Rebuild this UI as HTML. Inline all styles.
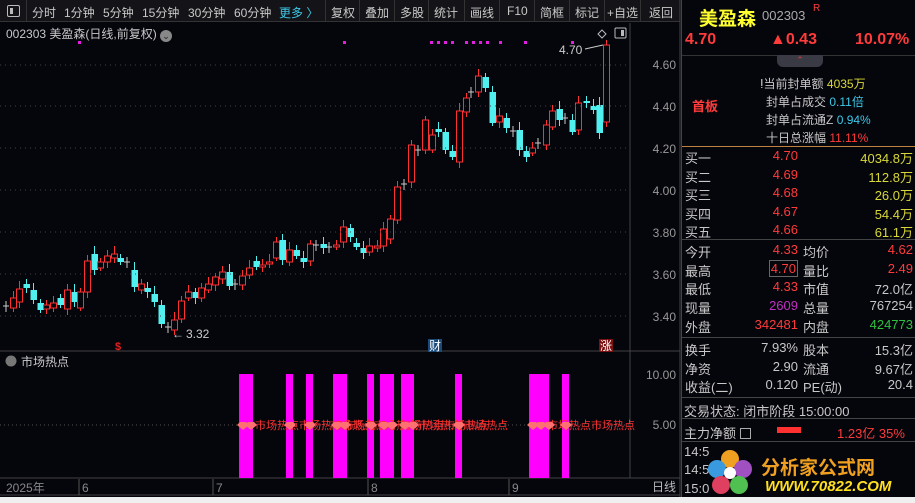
<!DOCTYPE html><html><head><meta charset="utf-8"><style>
*{margin:0;padding:0;box-sizing:border-box}
body{width:915px;height:503px;overflow:hidden;background:#05050c;font-family:"Liberation Sans","Noto Sans CJK SC",sans-serif;position:relative;color:#c8c8c8}
.a{position:absolute;white-space:nowrap}
#tb{position:absolute;left:0;top:0;width:680px;height:22px;background:#141418;border-bottom:1px solid #333;font-size:12px;color:#c8c8c8}
#tb span{position:absolute;top:4px}
.sep{position:absolute;top:0;width:1px;height:22px;background:#333}
#rp{position:absolute;left:681px;top:0;width:234px;height:503px;background:#05050c;border-left:1px solid #444;font-size:13px}
.hl{position:absolute;left:0;width:234px;height:1px;background:#444}
.r{color:#ff3b3b}.y{color:#d8d838}.c{color:#3cc8e8}.w{color:#c8c8c8}
</style></head><body>
<div id="tb">
<div style="position:absolute;left:7px;top:5px;width:13px;height:12px;border:1px solid #bbb;border-radius:2px"><div style="position:absolute;left:2px;top:2px;width:3px;height:6px;background:#bbb"></div></div>
<div class="sep" style="left:26px"></div>
<span style="left:32px">分时</span><span style="left:64px">1分钟</span><span style="left:103px">5分钟</span><span style="left:142px">15分钟</span><span style="left:188px">30分钟</span><span style="left:234px">60分钟</span><span style="left:279px;color:#3cc8e8">更多 〉</span>
<div class="sep" style="left:325px"></div><span style="left:331px">复权</span>
<div class="sep" style="left:359px"></div><span style="left:365px">叠加</span>
<div class="sep" style="left:394px"></div><span style="left:400px">多股</span>
<div class="sep" style="left:428px"></div><span style="left:434px">统计</span>
<div class="sep" style="left:464px"></div><span style="left:470px">画线</span>
<div class="sep" style="left:499px"></div><span style="left:507px">F10</span>
<div class="sep" style="left:534px"></div><span style="left:540px">简框</span>
<div class="sep" style="left:569px"></div><span style="left:575px">标记</span>
<div class="sep" style="left:604px"></div><span style="left:607px">+自选</span>
<div class="sep" style="left:640px"></div><span style="left:649px">返回</span>
</div>
<div class="a" style="left:6px;top:25px;font-size:12px;color:#c8c8c8">002303 美盈森(日线,前复权) <span style="display:inline-block;width:12px;height:12px;border-radius:6px;background:#888;color:#222;font-size:9px;text-align:center;line-height:12px;vertical-align:-1px">⌄</span></div>
<svg class="a" style="left:0;top:0" width="681" height="503" id="sv">
<line x1="630" y1="23" x2="630" y2="478" stroke="#444"/>
<line x1="0" y1="351" x2="680" y2="351" stroke="#444"/>
<line x1="0" y1="478" x2="680" y2="478" stroke="#444"/>
<line x1="0" y1="495" x2="680" y2="495" stroke="#444"/>
<line x1="680" y1="0" x2="680" y2="503" stroke="#444"/>
<g id="cd"></g>
<g font-size="12" fill="#999" text-anchor="end">
<text x="676" y="69">4.60</text><text x="676" y="111">4.40</text><text x="676" y="153">4.20</text><text x="676" y="195">4.00</text><text x="676" y="237">3.80</text><text x="676" y="279">3.60</text><text x="676" y="321">3.40</text>
<text x="676" y="379">10.00</text><text x="676" y="429">5.00</text>
</g>
<text x="676" y="491" font-size="12" fill="#bbb" text-anchor="end">日线</text>
<g font-size="12" fill="#888"><text x="6" y="492">2025年</text><text x="82" y="492">6</text><text x="216" y="492">7</text><text x="371" y="492">8</text><text x="512" y="492">9</text></g>
<g stroke="#555"><line x1="79" y1="479" x2="79" y2="495"/><line x1="213" y1="479" x2="213" y2="495"/><line x1="368" y1="479" x2="368" y2="495"/><line x1="509" y1="479" x2="509" y2="495"/></g>
<text x="186" y="338" font-size="12" fill="#ccc">3.32</text><text x="172" y="338" font-size="12" fill="#ccc">←</text>
<text x="559" y="54" font-size="12" fill="#ccc">4.70</text><path d="M585 49 L603 45" stroke="#ccc"/>
<path d="M602 30 l4 4 l-4 4 l-4 -4z" fill="none" stroke="#bbb"/>
<rect x="615" y="28" width="11" height="10" rx="1" fill="none" stroke="#bbb"/><rect x="621" y="30" width="3" height="6" fill="#bbb"/>
<text x="115" y="350" font-size="11" fill="#e02020" font-weight="bold">$</text>
<rect x="428" y="339" width="14" height="13" fill="#1a4a7a"/><text x="429" y="350" font-size="12" fill="#fff">财</text>
<rect x="599" y="339" width="14" height="13" fill="#7a1010"/><text x="600" y="350" font-size="12" fill="#fff">涨</text>
<circle cx="11" cy="361" r="5.5" fill="#777"/><text x="21" y="366" font-size="12" fill="#ccc">市场热点</text>
<line x1="0" y1="425" x2="630" y2="425" stroke="#555" stroke-dasharray="1,3"/>
<g fill="#ff00ff" id="mb"></g>
<g fill="#ff3030" font-size="11">
<text x="255" y="429">市场热点市场热点市场热点</text><text x="330" y="429">市场热点市场热点市场热点</text><text x="400" y="429">市场热点市场热点</text><text x="464" y="429">市场热点</text><text x="547" y="429">市场热点市场热点</text>
</g>
<g fill="#ff7070" id="dm"></g>
</svg>
<div id="rp">
<div class="a" style="left:17px;top:4px;font-size:19px;color:#ffff30;font-weight:bold">美盈森</div>
<div class="a" style="left:80px;top:8px;font-size:13px;color:#aaa">002303</div>
<div class="a" style="left:131px;top:3px;font-size:10px"><span class="r">R</span></div>
<div class="a r" style="left:3px;top:31px;font-size:16px;font-weight:bold">4.70</div>
<div class="a r" style="left:88px;top:31px;font-size:16px;font-weight:bold">▲0.43</div>
<div class="a r" style="left:173px;top:31px;font-size:16px;font-weight:bold">10.07%</div>
<div class="hl" style="top:55px;background:#333"></div>
<div class="a" style="left:95px;top:55px;width:46px;height:12px;background:#3a3a44;border-radius:0 0 6px 6px;color:#e04040;font-size:9px;text-align:center">⌃</div>
<div class="a r" style="left:10px;top:96px;font-size:13px;font-weight:bold">首板</div>
<div class="a" style="left:78px;top:75px;font-size:12px"><span class="w">ⵑ当前封单额</span> <span class="y">4035万</span></div>
<div class="a" style="left:84px;top:93px;font-size:12px"><span class="w">封单占成交</span> <span class="c">0.11倍</span></div>
<div class="a" style="left:84px;top:111px;font-size:12px"><span class="w">封单占流通Z</span> <span class="c">0.94%</span></div>
<div class="a" style="left:84px;top:129px;font-size:12px"><span class="w">十日总涨幅</span> <span class="r">11.11%</span></div>
<div class="hl" style="top:146px;background:#c08040"></div>
<div id="tbl"></div>
<div class="hl" style="top:239px"></div>
<div class="hl" style="top:337px"></div>
<div class="hl" style="top:397px"></div>
<div class="hl" style="top:418px"></div>
<div class="hl" style="top:441px"></div>
<div class="a w" style="left:2px;top:401px;font-size:13px">交易状态: 闭市阶段 15:00:00</div>
<div class="a w" style="left:2px;top:423px;font-size:13px">主力净额 <span style="display:inline-block;width:11px;height:11px;border:1px solid #aaa;vertical-align:-1px"></span></div>
<div class="a" style="left:95px;top:427px;width:24px;height:6px;background:#ff3030"></div>
<div class="a r" style="left:155px;top:423px;font-size:13px">1.23亿 35%</div>
<div class="a w" style="left:2px;top:444px;font-size:13px">14:5</div>
<div class="a w" style="left:2px;top:462px;font-size:13px">14:5</div>
<div class="a w" style="left:2px;top:481px;font-size:13px">15:0</div>
</div>
<div class="a" style="left:705px;top:447px;width:210px;height:50px">
<svg width="50" height="50" style="position:absolute;left:0;top:0"><circle cx="25" cy="12" r="9" fill="#f0a020"/><circle cx="12" cy="22" r="9" fill="#3a9ae0"/><circle cx="38" cy="22" r="9" fill="#a050c0"/><circle cx="16" cy="38" r="9" fill="#e04060"/><circle cx="34" cy="38" r="9" fill="#50c050"/><circle cx="25" cy="26" r="6" fill="#fff"/></svg>
<div class="a" style="left:56px;top:6px;font-size:19px;font-weight:bold;color:#f0a020">分析家公式网</div>
<div class="a" style="left:60px;top:31px;font-size:15px;font-weight:bold;font-style:italic;color:#ffe020">WWW.70822.COM</div>
</div>
<div class="a" style="left:0;top:497px;width:915px;height:6px;background:#f0f0f0"></div>
<script>
var d=[[6,306,306],[13,298,308,1],[19,289,302,1],[26,284,288],[33,290,300],[40,303,310],[46,305,309,1],[53,303,308,1],[60,298,305],[67,290,309,1],[74,292,302],[80,292,308,1],[87,261,292,1],[94,254,270],[100,262,268,1],[107,256,262,1],[114,254,258,1],[120,258,262],[127,262,263],[134,270,287],[141,284,290,1],[147,288,292],[154,294,302],[161,305,324],[168,327,327],[174,320,330,1],[181,301,319,1],[188,292,298,1],[195,292,298],[201,288,298,1],[208,284,290,1],[215,277,285,1],[222,272,279,1],[229,272,286],[235,284,284],[242,276,285,1],[249,268,275,1],[256,261,267],[262,265,267,1],[269,262,264,1],[276,242,258,1],[282,240,260],[289,250,262,1],[296,250,256],[303,258,262],[310,244,261,1],[316,245,245],[323,244,248],[329,247,247],[336,245,247,1],[343,227,242,1],[350,228,237],[356,243,247],[363,248,253],[369,246,252,1],[377,246,248,1],[383,229,246,1],[390,219,239,1],[397,187,220,1],[404,184,185],[411,145,182,1],[418,150,151],[425,120,150,1],[432,135,150,1],[438,129,132],[445,132,150],[452,151,157],[459,111,162,1],[466,98,112,1],[471,92,92],[478,76,92,1],[485,77,88],[492,92,123],[499,116,122,1],[506,118,128],[513,131,132],[519,130,150],[526,151,157],[532,148,153,1],[538,143,143],[546,125,145,1],[552,111,127,1],[559,109,120],[565,118,118],[572,120,132],[578,103,130,1],[586,101,103],[593,106,110],[599,105,133],[606,45,122,1]];
var s='';
d.forEach(function(c){var x=c[0],t=c[1],b=c[2],up=c[3];var hi=t-4-(x%5),lo=b+3+(x%4);
if(b-t<2){s+='<line x1="'+x+'" y1="'+(t-5)+'" x2="'+x+'" y2="'+(t+6)+'" stroke="#ccc"/><line x1="'+(x-3)+'" y1="'+t+'" x2="'+(x+3)+'" y2="'+t+'" stroke="#ccc"/>';return;}
var col=up?'#ff3030':'#50f0f0';
s+='<line x1="'+(x+.5)+'" y1="'+hi+'" x2="'+(x+.5)+'" y2="'+lo+'" stroke="'+col+'"/>';
s+=up?'<rect x="'+(x-2.5)+'" y="'+t+'" width="6" height="'+(b-t)+'" fill="#05050c" stroke="'+col+'"/>':'<rect x="'+(x-2.5)+'" y="'+t+'" width="6.5" height="'+(b-t)+'" fill="'+col+'"/>';});
s+='<g stroke="#444" stroke-dasharray="1,4">';[65,106,148,190,232,274,316].forEach(function(y){s+='<line x1="0" y1="'+y+'" x2="630" y2="'+y+'"/>'});s+='</g>';
[78,343,430,437,444,451,465,472,479,486,499,524,571].forEach(function(x){s+='<rect x="'+x+'" y="41" width="3" height="3" fill="#e020e0"/>'});
document.getElementById('cd').innerHTML=s;
var m='',dm='';[[239,253],[286,293],[306,313],[333,347],[367,374],[380,394],[401,414],[455,462],[529,549],[562,569]].forEach(function(b){m+='<rect x="'+b[0]+'" y="374" width="'+(b[1]-b[0])+'" height="104"/>';for(var x=b[0];x<b[1];x+=8)dm+='<path d="M'+(x-2)+' 425 l3 -3 h6 l3 3 l-6 5z"/>'});
document.getElementById('mb').innerHTML=m;document.getElementById('dm').innerHTML=dm;
var rows=[['买一','4.70','4034.8万','y'],['买二','4.69','112.8万','y'],['买三','4.68','26.0万','y'],['买四','4.67','54.4万','y'],['买五','4.66','61.1万','y']];
var h='';rows.forEach(function(r,i){var y=148+i*18.5;h+='<div class="a w" style="left:3px;top:'+y+'px">'+r[0]+'</div><div class="a r" style="right:117px;top:'+y+'px">'+r[1]+'</div><div class="a y" style="right:2px;top:'+y+'px">'+r[2]+'</div>'});
var r2=[['今开','4.33','r','均价','4.62','r'],['最高','4.70','r','量比','2.49','r'],['最低','4.33','r','市值','72.0亿','w'],['现量','2609','p','总量','767254','w'],['外盘','342481','r','内盘','424773','g']];
var cm={r:'#ff3b3b',w:'#c8c8c8',p:'#c030c0',g:'#30c040'};
r2.forEach(function(r,i){var y=242+i*18.7;h+='<div class="a w" style="left:3px;top:'+y+'px">'+r[0]+'</div><div class="a" style="right:117px;top:'+y+'px;color:'+cm[r[2]]+(i==1?';border:1px solid #666;padding:0 1px;top:'+(y-1)+'px':'')+'">'+r[1]+'</div><div class="a w" style="left:121px;top:'+y+'px">'+r[3]+'</div><div class="a" style="right:2px;top:'+y+'px;color:'+cm[r[5]]+'">'+r[4]+'</div>'});
var r3=[['换手','7.93%','股本','15.3亿'],['净资','2.90','流通','9.67亿'],['收益(二)','0.120','PE(动)','20.4']];
r3.forEach(function(r,i){var y=340+i*18.5;h+='<div class="a w" style="left:3px;top:'+y+'px">'+r[0]+'</div><div class="a w" style="right:117px;top:'+y+'px">'+r[1]+'</div><div class="a w" style="left:121px;top:'+y+'px">'+r[2]+'</div><div class="a w" style="right:2px;top:'+y+'px">'+r[3]+'</div>'});
document.getElementById('tbl').innerHTML=h;
</script>
</body></html>
